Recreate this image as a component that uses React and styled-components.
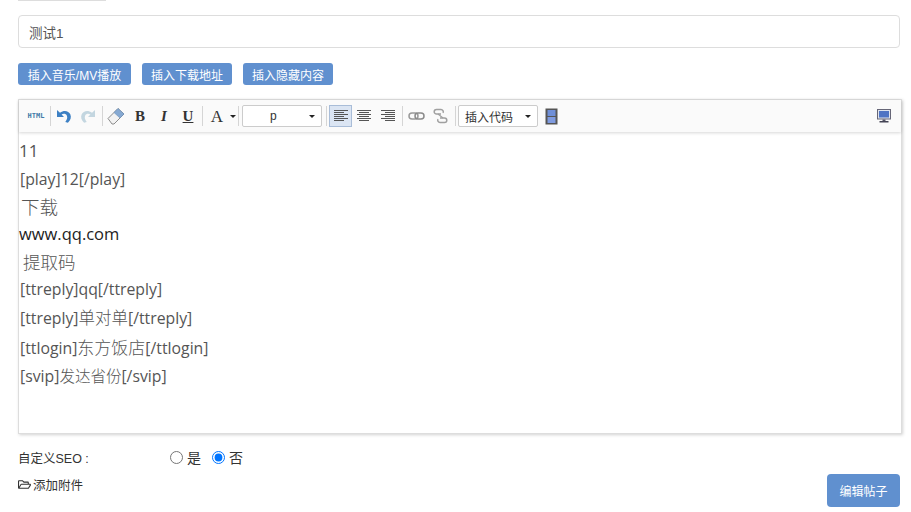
import React from "react";
import styled, { createGlobalStyle } from "styled-components";
import { FaRegFolderOpen } from "react-icons/fa";

const GlobalStyle = createGlobalStyle`
  html, body {
    margin: 0;
    padding: 0;
    background: #fff;
    overflow: hidden;
  }
  body {
    font-family: "Liberation Sans", "Noto Sans CJK SC", sans-serif;
    color: #333;
  }
`;

const Page = styled.div`
  width: 911px;
  height: 512px;
  box-sizing: border-box;
  padding: 0 9px 0 18px;
  overflow: hidden;
`;

const TopSliver = styled.div`
  width: 88px;
  height: 1px;
  background: #ddd;
  margin-bottom: 14px;
`;

const TitleInput = styled.input`
  display: block;
  box-sizing: border-box;
  width: 882px;
  height: 33px;
  padding: 0 10px;
  border: 1px solid #ddd;
  border-radius: 4px;
  font: 13.5px "Liberation Sans", "Noto Sans CJK SC", sans-serif;
  color: #555;
  outline: none;
`;

const InsertRow = styled.div`
  display: flex;
  gap: 11px;
  margin-top: 15px;
`;

const BlueButton = styled.button`
  width: ${(p) => p.$w}px;
  height: 22px;
  padding: 0;
  border: 0;
  border-radius: 3px;
  background: #6090cf;
  color: #fff;
  font: 12px "Liberation Sans", "Noto Sans CJK SC", sans-serif;
  white-space: nowrap;
`;

const Editor = styled.div`
  box-sizing: border-box;
  width: 884px;
  height: 335px;
  margin-top: 14px;
  border: 1px solid #ddd;
  box-shadow: 1px 1px 3px rgba(0, 0, 0, 0.18);
  display: flex;
  flex-direction: column;
`;

const Toolbar = styled.div`
  flex: none;
  height: 32px;
  box-sizing: border-box;
  padding: 0 5px;
  display: flex;
  align-items: center;
  background: #fafafa;
  box-shadow: 0 1px 3px rgba(0, 0, 0, 0.16);
  position: relative;
`;

const ToolButton = styled.div`
  flex: none;
  width: ${(p) => p.$w || 24}px;
  height: 22px;
  box-sizing: border-box;
  display: flex;
  align-items: center;
  justify-content: center;
  border: 1px solid ${(p) => (p.$active ? "#a9bdd8" : "transparent")};
  background: ${(p) => (p.$active ? "#dbe5f3" : "transparent")};
`;

const Sep = styled.div`
  flex: none;
  width: 1px;
  height: 20px;
  margin: 0 ${(p) => p.$r ?? 1}px 0 ${(p) => p.$l ?? 2}px;
  background: #d5d5d5;
`;

const HtmlLabel = styled.span`
  font: bold 7px "DejaVu Sans Mono", monospace;
  color: #3f7aa8;
`;

const SerifGlyph = styled.span`
  font-family: "Liberation Serif", serif;
  font-size: ${(p) => p.$size || 15}px;
  font-weight: ${(p) => (p.$regular ? 400 : 700)};
  font-style: ${(p) => (p.$italic ? "italic" : "normal")};
  text-decoration: ${(p) => (p.$under ? "underline" : "none")};
  color: #333;
  line-height: 1;
`;

const Caret = styled.span`
  flex: none;
  width: 0;
  height: 0;
  border-left: 3px solid transparent;
  border-right: 3px solid transparent;
  border-top: 3px solid #222;
`;

const Select = styled.div`
  flex: none;
  box-sizing: border-box;
  width: 80px;
  height: 22px;
  display: flex;
  align-items: center;
  padding: 0 6px 0 ${(p) => p.$pl}px;
  border: 1px solid #ccc;
  border-radius: 2px;
  background: #fff;
  font-size: 12px;
  color: #333;
  justify-content: space-between;
`;

const Spacer = styled.div`
  flex: 1;
`;

const Body = styled.div`
  flex: 1;
  padding-top: 3px;
  font-family: "Open Sans", "Noto Sans CJK SC", sans-serif;
  color: #555;
`;

const Line = styled.div`
  height: ${(p) => p.$h}px;
  line-height: ${(p) => p.$h}px;
  padding-left: ${(p) => p.$pl ?? 1}px;
  color: ${(p) => p.$color || "#555"};
  font-size: ${(p) => p.$size || 15.8}px;
  white-space: nowrap;
`;

const Cjk = styled.span`
  font-family: "Noto Sans CJK SC", sans-serif;
  font-size: ${(p) => p.$size}px;
  font-weight: 300;
`;

const SeoRow = styled.div`
  display: flex;
  align-items: center;
  height: 20px;
  margin-top: 13px;
  font-size: 12.5px;
  color: #333;
`;

const SeoLabel = styled.span`
  width: 152px;
`;

const RadioLabel = styled.label`
  display: flex;
  align-items: center;
  font-size: 14px;
  gap: 4px;
  margin-right: 11px;
`;

const Radio = styled.input`
  width: 13px;
  height: 13px;
  margin: 0;
`;

const BottomRow = styled.div`
  display: flex;
  justify-content: space-between;
  width: 882px;
`;

const AttachLink = styled.a`
  display: flex;
  align-items: center;
  gap: 2px;
  height: 20px;
  margin-top: 7px;
  font-size: 12.5px;
  color: #333;
`;

const SubmitButton = styled(BlueButton)`
  height: 33px;
  border-radius: 4px;
  margin-top: 7px;
`;

function Undo({ faded, flip }) {
  const c = faded ? "#c3d6e0" : "#3d80c4";
  return (
    <svg width="16" height="16" viewBox="0 0 16 16" style={flip ? { transform: "scaleX(-1)" } : undefined}>
      <path d="M1 2v7h7L5.600 6.600C7.400 5.200 10 5.700 10.900 7.700c.8 1.900.1 4-1.600 6.300l2.600.8C14.600 12.300 15.600 9.300 14.300 6.300 12.800 2.800 7.800 1.700 4 4.800z" fill={c} />
    </svg>
  );
}

function Eraser() {
  return (
    <svg width="18" height="18" viewBox="0 0 18 18">
      <path d="M1 11.500 11 1.500l6 5.500-10 10H5z" fill="#f2f2f2" stroke="#8c8c8c" />
      <path d="M7 5.500 11 1.500l6 5.500-4 4z" fill="#86a9d2" stroke="#6a8fb8" strokeWidth=".6" />
    </svg>
  );
}

function AlignIcon({ mode }) {
  const x = mode === "left" ? 1 : mode === "center" ? 3 : 5;
  const rows = [[1, 14], [x, 10], [1, 14], [x, 10], [1, 14], [x, 10]];
  return (
    <svg width="16" height="14" viewBox="0 0 16 14">
      {rows.map((r, i) => (
        <rect key={i} x={r[0]} y={1 + i * 2} width={r[1]} height="1" fill="#555" />
      ))}
    </svg>
  );
}

function LinkIcon() {
  return (
    <svg width="17" height="10" viewBox="0 0 17 10" fill="none">
      <rect x="1" y="2" width="9" height="6" rx="3" stroke="#999" strokeWidth="1.500" />
      <rect x="7" y="2" width="9" height="6" rx="3" stroke="#8a8a8a" strokeWidth="1.500" />
    </svg>
  );
}

function UnlinkIcon() {
  return (
    <svg width="15" height="16" viewBox="0 0 15 16" fill="none">
      <path d="M8 6H3.500a2.300 2.300 0 0 1 0-4.600H8a2.300 2.300 0 0 1 2 3.400" stroke="#a0a0a0" strokeWidth="1.500" />
      <path d="M7 10h4.500a2.300 2.300 0 0 1 0 4.600H7a2.300 2.300 0 0 1-2-3.400" stroke="#a0a0a0" strokeWidth="1.500" />
      <path d="M5 6l5 4" stroke="#a0a0a0" strokeWidth="1.300" />
    </svg>
  );
}

function FilmIcon() {
  return (
    <svg width="13" height="17" viewBox="0 0 13 17">
      <rect x=".5" y=".5" width="12" height="16" fill="#555" />
      <rect x="2.500" y="2" width="8" height="6" fill="#6f8fd8" />
      <rect x="2.500" y="9" width="8" height="6" fill="#7f9be0" />
    </svg>
  );
}

function MonitorIcon() {
  return (
    <svg width="14" height="14" viewBox="0 0 14 14">
      <rect x=".5" y=".5" width="13" height="9.500" fill="#dfe4ee" stroke="#667" />
      <rect x="2" y="2" width="10" height="6.500" fill="#4f74c4" />
      <rect x="5.500" y="10.500" width="3" height="1.500" fill="#556" />
      <rect x="2.500" y="12" width="9" height="1.500" fill="#445" />
    </svg>
  );
}

const LINES = [
  { h: 31, text: "11", pl: 0, size: 17 },
  { h: 26, text: "[play]12[/play]" },
  { h: 28, text: "下载", pl: 2, cjk: 18.500 },
  { h: 27, text: "www.qq.com", pl: 0, color: "#222", size: 16.500 },
  { h: 29, text: "提取码", pl: 4, cjk: 17.500 },
  { h: 27, text: "[ttreply]qq[/ttreply]" },
  { h: 29, text: "[ttreply]单对单[/ttreply]" },
  { h: 29, text: "[ttlogin]东方饭店[/ttlogin]", cjk: 17 },
  { h: 29, text: "[svip]发达省份[/svip]", cjk: 15.500 },
];

function MixedText({ text, cjk = 16.500 }) {
  return text.split(/([\u4e00-\u9fff]+)/).map((part, i) =>
    i % 2 ? <Cjk key={i} $size={cjk}>{part}</Cjk> : part
  );
}

export default function App() {
  return (
    <Page>
      <GlobalStyle />
      <TopSliver />
      <TitleInput defaultValue="测试1" />
      <InsertRow>
        <BlueButton $w={113}>插入音乐/MV播放</BlueButton>
        <BlueButton $w={90}>插入下载地址</BlueButton>
        <BlueButton $w={90}>插入隐藏内容</BlueButton>
      </InsertRow>
      <Editor>
        <Toolbar>
          <ToolButton><HtmlLabel>HTML</HtmlLabel></ToolButton>
          <Sep />
          <ToolButton><Undo /></ToolButton>
          <ToolButton><Undo faded flip /></ToolButton>
          <Sep />
          <ToolButton><Eraser /></ToolButton>
          <ToolButton><SerifGlyph>B</SerifGlyph></ToolButton>
          <ToolButton><SerifGlyph $italic>I</SerifGlyph></ToolButton>
          <ToolButton><SerifGlyph $under>U</SerifGlyph></ToolButton>
          <Sep />
          <ToolButton $w={26}><SerifGlyph $size={17} $regular>A</SerifGlyph></ToolButton>
          <Caret />
          <Sep $l={2} $r={3} />
          <Select $pl={27}><span>p</span><Caret /></Select>
          <Sep $l={4} $r={2} />
          <ToolButton $active $w={23}><AlignIcon mode="left" /></ToolButton>
          <ToolButton><AlignIcon mode="center" /></ToolButton>
          <ToolButton><AlignIcon mode="right" /></ToolButton>
          <Sep />
          <ToolButton><LinkIcon /></ToolButton>
          <ToolButton><UnlinkIcon /></ToolButton>
          <Sep $l={3} $r={2} />
          <Select $pl={6}><span>插入代码</span><Caret /></Select>
          <ToolButton $w={26}><FilmIcon /></ToolButton>
          <Spacer />
          <ToolButton><MonitorIcon /></ToolButton>
        </Toolbar>
        <Body>
          {LINES.map((l, i) => (
            <Line key={i} $h={l.h} $pl={l.pl} $color={l.color} $size={l.size}>
              <MixedText text={l.text} cjk={l.cjk} />
            </Line>
          ))}
        </Body>
      </Editor>
      <SeoRow>
        <SeoLabel>自定义SEO :</SeoLabel>
        <RadioLabel><Radio type="radio" name="seo" />是</RadioLabel>
        <RadioLabel><Radio type="radio" name="seo" defaultChecked />否</RadioLabel>
      </SeoRow>
      <BottomRow>
        <AttachLink><FaRegFolderOpen size={13} />添加附件</AttachLink>
        <SubmitButton $w={73}>编辑帖子</SubmitButton>
      </BottomRow>
    </Page>
  );
}
